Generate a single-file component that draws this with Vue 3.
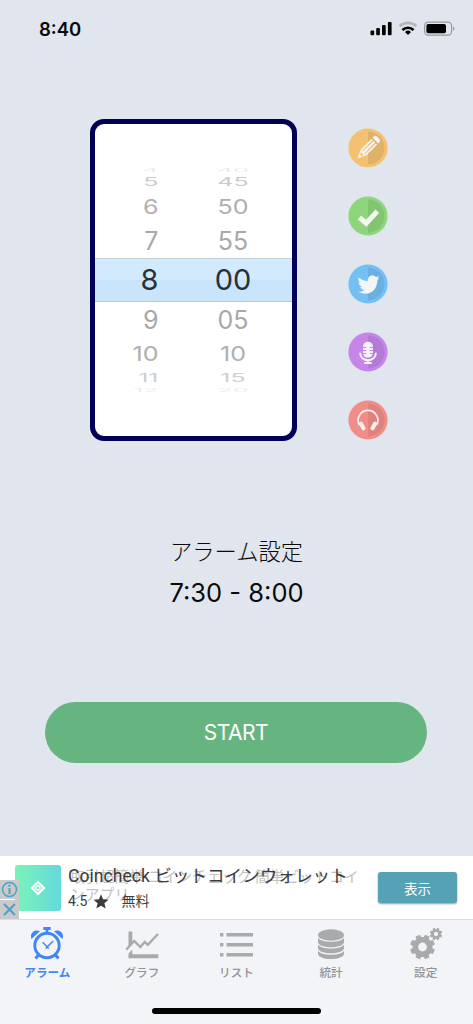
<script setup>
const wheel = [
  { hour: '4', minute: '40', height: 8, stretch: 0.17, opacity: 0.22 },
  { hour: '5', minute: '45', height: 16, stretch: 0.48, opacity: 0.6 },
  { hour: '6', minute: '50', height: 33, stretch: 0.81, opacity: 0.9 },
  { hour: '7', minute: '55', height: 35, stretch: 1, opacity: 1 },
  { hour: '8', minute: '00', height: 44, stretch: 1, opacity: 1, selected: true },
  { hour: '9', minute: '05', height: 36, stretch: 1, opacity: 1 },
  { hour: '10', minute: '10', height: 31, stretch: 0.81, opacity: 0.9 },
  { hour: '11', minute: '15', height: 17, stretch: 0.48, opacity: 0.55 },
  { hour: '12', minute: '20', height: 7, stretch: 0.17, opacity: 0.2 },
]

const actions = [
  { id: 'edit', color: '#f4c172' },
  { id: 'check', color: '#8ed67b' },
  { id: 'bird', color: '#74c0f5' },
  { id: 'mic', color: '#c585e9' },
  { id: 'headphones', color: '#f28c88' },
]

const tabs = [
  { id: 'alarm', label: 'アラーム', active: true },
  { id: 'graph', label: 'グラフ' },
  { id: 'list', label: 'リスト' },
  { id: 'stats', label: '統計' },
  { id: 'settings', label: '設定' },
]

const gear = (cx, cy, outer, inner, teeth) => {
  const points = []
  const step = (Math.PI * 2) / teeth
  for (let i = 0; i < teeth; i++) {
    const a = i * step + step / 2
    for (const [k, r] of [[-0.34, inner], [-0.24, outer], [0.24, outer], [0.34, inner]]) {
      points.push(`${(cx + r * Math.cos(a + k * step)).toFixed(2)} ${(cy + r * Math.sin(a + k * step)).toFixed(2)}`)
    }
  }
  const h = inner * 0.44
  return `M${points.join('L')}ZM${cx - h} ${cy}a${h} ${h} 0 1 0 ${h * 2} 0a${h} ${h} 0 1 0 ${-h * 2} 0Z`
}
const bigGear = gear(13.5, 20, 12.6, 10, 8)
const smallGear = gear(27, 7, 6.3, 4.9, 8)
</script>

<template>
  <div class="screen">
    <header class="status">
      <span class="clock">8:40</span>
      <svg class="signals" width="86" height="16" viewBox="0 0 86 16">
        <rect x="0.5" y="9.5" width="3.7" height="4.8" rx="1" />
        <rect x="6.2" y="7" width="3.7" height="7.3" rx="1" />
        <rect x="12" y="4" width="3.7" height="10.3" rx="1" />
        <rect x="17.9" y="1" width="3.7" height="13.3" rx="1" />
        <g fill="none" stroke-width="2.7">
          <path d="M29.5 5.200a12.600 12.600 0 0 1 17 0" stroke="#b3b7bc" />
          <path d="M32.400 8.900a8.300 8.300 0 0 1 11.200 0" stroke="#000" />
        </g>
        <path d="M38 13.900l-3-3a4.400 4.400 0 0 1 6 0z" />
        <rect x="54.6" y="1.1" width="27" height="13" rx="3.6" fill="none" stroke="#96999f" stroke-width="1.2" />
        <rect x="56.4" y="2.9" width="19.6" height="9.4" rx="1.8" />
        <path d="M83 5.400c2 .8 2 3.600 0 4.400z" fill="#96999f" />
      </svg>
    </header>

    <section class="setup">
      <div class="picker">
        <div
          v-for="row in wheel"
          :key="row.hour"
          class="row"
          :class="{ selected: row.selected }"
          :style="{ height: row.height + 'px' }"
        >
          <span class="hour" :style="{ transform: `scaleY(${row.stretch})`, opacity: row.opacity }">{{ row.hour }}</span>
          <span class="minute" :style="{ transform: `scaleY(${row.stretch})`, opacity: row.opacity }">{{ row.minute }}</span>
        </div>
      </div>

      <div class="actions">
        <svg v-for="a in actions" :key="a.id" width="40" height="40" viewBox="-20 -20 40 40">
          <circle r="19.6" :fill="a.color" />
          <path d="M0-16.500a16.500 16.500 0 0 1 0 33z" fill="#000" opacity=".08" />
          <g v-if="a.id === 'edit'" transform="rotate(45)" fill="#f6f4f0">
            <path d="M-4-10.500v-1.500a2.500 2.500 0 0 1 2.500-2.500h3a2.500 2.500 0 0 1 2.500 2.500v1.500z" />
            <path d="M-4-9h1.800v15.500H-4zM-1.200-9h2.400v15.500h-2.400zM2.200-9H4v15.500H2.200z" />
            <path d="M-4 6h8L0 15zM-1.900 8L-.8 10.500h1.600L1.900 8z" fill-rule="evenodd" />
          </g>
          <path v-else-if="a.id === 'check'" d="M-8.600 1.500L-1.800 7.200 9.300-4.800" fill="none" stroke="#f5f6f3" stroke-width="5" />
          <path
            v-else-if="a.id === 'bird'"
            d="M-9.500-6.500C-7-4.500-4-3.300-.3-2.800c-.2-3.700 2-5.600 4.800-5.600 1.500 0 2.700.6 3.500 1.500l3.300-.9-1.900 2.600 1.700-.3-1.800 2C9.300 4.200 4.600 9.700-2.600 9.700c-3 0-5.200-.8-7-1.900 2.500.1 4.500-.5 6-1.800-2.200-.2-3.600-1.300-4.100-2.900h2C-8 2.300-9.200.7-9.400-1.500l2 .6C-9.300-2.400-10-4.400-9.500-6.500z"
            fill="#f3f5f7"
          />
          <g v-else-if="a.id === 'mic'" fill="#f4f0f6">
            <rect x="-5" y="-10.200" width="10" height="16" rx="5" />
            <path d="M-5-4.500h3.200M1.800-4.500H5M-5-1.500h3.200M1.800-1.500H5M-5 1.500h3.200M1.800 1.500H5" :stroke="a.color" stroke-width="1" />
            <path d="M-7.800 .8v.7a7.800 6.700 0 0 0 15.600 0v-.7" fill="none" stroke="#f4f0f6" stroke-width="2" />
            <path d="M-1.300 8h2.600v2h2.500v1.900h-7.600V10h2.500z" />
          </g>
          <g v-else fill="#f7efee">
            <path d="M-8.600 5.200A9.900 9.900 0 1 1 8.600 5.200" fill="none" stroke="#f7efee" stroke-width="1.700" />
            <rect x="-7.900" y="1.400" width="4.200" height="9.200" rx="1.900" transform="rotate(-28 -5.800 6)" />
            <rect x="3.700" y="1.400" width="4.200" height="9.200" rx="1.900" transform="rotate(28 5.800 6)" />
          </g>
        </svg>
      </div>
    </section>

    <section class="summary">
      <h1>アラーム設定</h1>
      <p>7:30 - 8:00</p>
    </section>

    <button class="start">START</button>

    <aside class="ad">
      <div class="badges">
        <svg width="19" height="19" viewBox="0 0 19 19">
          <circle cx="9.500" cy="9.500" r="7" fill="none" stroke="#4aa3c4" stroke-width="1.500" />
          <path d="M9.500 8v6M9.500 4.700v2" stroke="#4aa3c4" stroke-width="2" />
        </svg>
        <svg width="19" height="19" viewBox="0 0 19 19">
          <path d="M4 4l11 11M15 4L4 15" stroke="#4aa3c4" stroke-width="2" />
        </svg>
      </div>
      <div class="app-icon">
        <svg width="16" height="16" viewBox="-8 -8 16 16" fill="none" stroke="#fff">
          <path d="M0-6L6 0 0 6-6 0z" stroke-width="2" />
          <path d="M0-2.600L2.600 0 0 2.600-2.600 0z" stroke-width="1.400" />
        </svg>
      </div>
      <div class="ad-copy">
        <div class="ghost">取引超簡単 コインチェック 簡単ビットコイ<br />ンアプリ</div>
        <div class="ad-title"><span>Coincheck</span> ビットコインウォレット</div>
        <div class="ad-meta">
          <span>4.5</span>
          <svg width="16" height="15" viewBox="0 0 16 15"><path d="M8 .3l2.100 5 5.400.400-4.100 3.500 1.300 5.300L8 11.700l-4.700 2.800 1.300-5.300L.5 5.700l5.400-.400z" fill="#3c3c3c" /></svg>
          <span>無料</span>
        </div>
      </div>
      <button class="ad-button">表示</button>
    </aside>

    <nav class="tabs">
      <div class="tab-row">
        <div v-for="t in tabs" :key="t.id" class="tab" :class="{ active: t.active }">
          <svg width="34" height="34" viewBox="0 0 34 34" fill="currentColor">
            <g v-if="t.id === 'alarm'" fill="none" stroke="currentColor">
              <circle cx="17" cy="18.500" r="12.200" stroke-width="2.900" />
              <path d="M17 2.500v4M13.300 1.500h7.400" stroke-width="2.800" />
              <path d="M8.500 28L5.500 31.500M25.500 28l3 3.500" stroke-width="3" />
              <path d="M12.700 15.300l4.500 4.600 6-5.900M15.700 21.500l1.500-1.500 1.500 1.500" stroke-width="1.500" />
              <path d="M1.500 12C-.8 6.500 4.500 1.500 10 4.300zM32.500 12c2.300-5.500-3-10.500-8.500-7.700z" fill="currentColor" stroke="none" />
            </g>
            <g v-else-if="t.id === 'graph'">
              <path d="M3.500 4.500h3.800v12.300L3.500 21zM3.500 26.500l3.800-4v4.800h26v4H3.500z" />
              <path d="M1.200 22.800L9.200 14l6.200 6 4.300-5 3.100 2.900L33 7" fill="none" stroke="currentColor" stroke-width="2.300" />
            </g>
            <path v-else-if="t.id === 'list'" d="M1 6h3.400v3.400H1zM7.500 6H34v3.400H7.500zM1 16h3.400v3.400H1zM7.500 16H34v3.400H7.500zM1 26h3.400v3.400H1zM7.500 26H34v3.400H7.500z" />
            <g v-else-if="t.id === 'stats'">
              <ellipse cx="17" cy="8" rx="13" ry="5.700" />
              <path d="M4 10.800c3 5.300 23 5.300 26 0v4.700c-1.500 6.300-24.500 6.300-26 0z" />
              <path d="M4 17.600c3 5.300 23 5.300 26 0v4c-1.500 6.300-24.500 6.300-26 0z" />
              <path d="M4 23.800c3 5.300 23 5.300 26 0V27c-1.500 6.800-24.500 6.800-26 0z" />
            </g>
            <g v-else fill-rule="evenodd">
              <path :d="bigGear" />
              <path :d="smallGear" />
            </g>
          </svg>
          <span>{{ t.label }}</span>
        </div>
      </div>
      <div class="home-bar"></div>
    </nav>
  </div>
</template>

<style>
body {
  background: #e1e5ed;
}
</style>

<style scoped>
.screen {
  width: 473px;
  height: 1024px;
  display: flex;
  flex-direction: column;
  background: #e1e5ed;
  font-family: Inter, "Noto Sans CJK JP", sans-serif;
  color: #0a0a0a;
  overflow: hidden;
}
button {
  border: 0;
  padding: 0;
  font-family: inherit;
  color: #fff;
}
.status {
  height: 58px;
  box-sizing: border-box;
  padding: 0 17px 0 39px;
  display: flex;
  align-items: center;
  justify-content: space-between;
}
.clock {
  font-size: 18.5px;
  font-weight: 600;
}
.setup {
  margin-top: 61px;
  padding-left: 90px;
  display: flex;
  align-items: flex-start;
}
.picker {
  box-sizing: border-box;
  width: 207px;
  height: 322px;
  border: 5px solid #010057;
  border-radius: 14px;
  background: #fff;
  padding-top: 42px;
}
.row {
  box-sizing: border-box;
  display: flex;
  align-items: center;
  line-height: 0;
  font-size: 25px;
  color: #a8a8a8;
}
.row.selected {
  font-size: 29px;
  color: #2b3033;
  background: linear-gradient(#d2eafe 50%, #c8e5fc 50%);
  border-top: 1px solid #c5d3dd;
  border-bottom: 1px solid #b5cbdc;
}
.hour {
  width: 63.5px;
  text-align: right;
}
.minute {
  width: 32px;
  margin-left: 58.5px;
  display: flex;
  justify-content: center;
}
.actions {
  margin: 8.5px 0 0 51px;
  display: flex;
  flex-direction: column;
  gap: 28.1px;
}
.actions svg {
  display: block;
}
.summary {
  margin-top: 94px;
  text-align: center;
}
.summary h1 {
  margin: 0;
  font-size: 22.3px;
  line-height: 33px;
  font-weight: 300;
}
.summary p {
  margin: 8px 0 0;
  font-size: 25.5px;
  line-height: 34px;
}
.start {
  margin: 92px 45px 0;
  width: 382px;
  height: 61px;
  border-radius: 31px;
  background: #66b581;
  font-size: 21px;
  letter-spacing: -0.5px;
}
.ad {
  margin-top: 93px;
  height: 63px;
  background: #fff;
  display: flex;
  flex: none;
}
.badges {
  width: 15px;
  padding-top: 24px;
  display: flex;
  flex-direction: column;
  gap: 1px;
  z-index: 1;
}
.badges svg {
  display: block;
  flex: none;
  background: #c9cacb;
}
.app-icon {
  width: 46px;
  height: 46px;
  margin-top: 9px;
  border-radius: 3px;
  background: linear-gradient(90deg, #7bf3b7, #64d9dc);
  display: flex;
  align-items: center;
  justify-content: center;
}
.ad-copy {
  position: relative;
  width: 300px;
  margin-left: 7px;
  font-family: Roboto, "Noto Sans CJK JP", sans-serif;
  color: #3c3c3c;
}
.ghost {
  position: absolute;
  top: 12px;
  left: 2px;
  font-size: 14.8px;
  line-height: 18px;
  font-weight: 400;
  white-space: nowrap;
  color: #c2c2c2;
}
.ad-title {
  position: relative;
  margin-top: 9px;
  font-size: 17.6px;
  line-height: 23px;
  white-space: nowrap;
}
.ad-meta {
  position: relative;
  margin-top: 4px;
  display: flex;
  align-items: center;
  font-size: 14px;
  line-height: 18px;
}
.ad-meta svg {
  margin: 0 12px 0 6px;
}
.ad-button {
  width: 79px;
  height: 31px;
  margin: 16px 0 0 10px;
  border-radius: 3px;
  background: #54a2b4;
  box-shadow: 0 1px 2px rgba(0, 0, 0, 0.4);
  font-size: 13.5px;
}
.tabs {
  flex: 1;
  border-top: 1px solid #dcdde0;
  background: #f2f4f8;
}
.tab-row {
  display: grid;
  grid-template-columns: repeat(5, 1fr);
  padding-top: 7px;
}
.tab {
  display: flex;
  flex-direction: column;
  align-items: center;
  color: #a9aaab;
}
.tab span {
  margin-top: 3px;
  font-size: 11.6px;
  line-height: 18px;
  font-weight: 500;
  color: #929395;
}
.tab.active,
.tab.active span {
  color: #4086f5;
}
.tab.active span {
  font-weight: 700;
}
.home-bar {
  width: 169px;
  height: 6px;
  margin: 26px auto 0;
  border-radius: 3px;
  background: #000;
}
</style>
